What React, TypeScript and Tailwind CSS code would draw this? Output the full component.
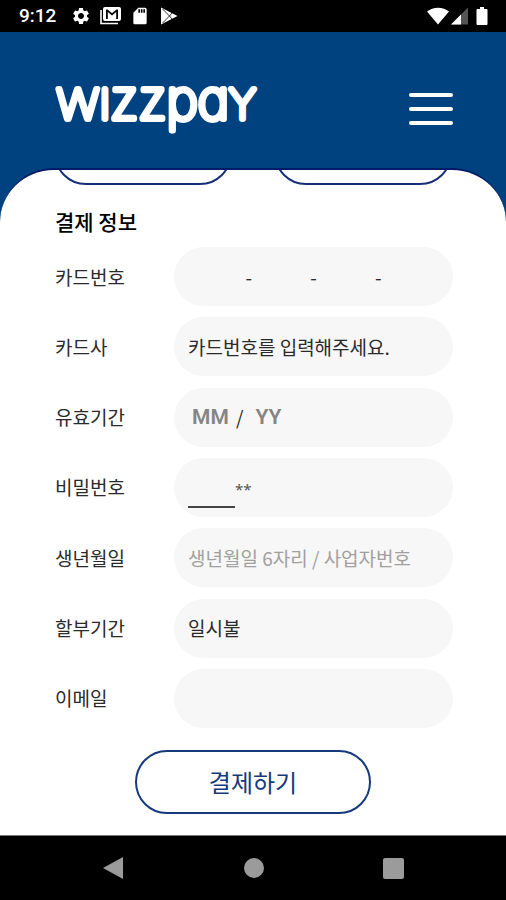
import type { ReactNode } from 'react';
import { MdSettings, MdSdCard } from 'react-icons/md';

const fieldBox = 'flex h-[59px] min-w-0 flex-1 items-center rounded-full bg-[#f7f7f7] px-3.5';
const textField = 'w-full min-w-0 bg-transparent outline-none';
const cardField = 'w-[57px] min-w-0 bg-transparent outline-none';
const dateField = 'w-11 font-[Roboto,sans-serif] text-[21px] font-semibold outline-none placeholder:text-[#858585]';

function StatusBar() {
  return (
    <div className="flex h-8 items-center justify-between bg-black pl-[19px] pr-[18px] text-white">
      <div className="flex items-center">
        <span className="w-[52px] font-[Roboto,sans-serif] text-[19px] font-medium leading-5">9:12</span>
        <MdSettings size={20} />
        <svg className="ml-2" width="23" height="20" viewBox="0 0 23 20">
          <path d="M2 4v13.5h17" fill="none" stroke="white" strokeWidth="1.6" />
          <path fillRule="evenodd" fill="white" d="M6 1h14a2 2 0 0 1 2 2v10a2 2 0 0 1-2 2H6a2 2 0 0 1-2-2V3a2 2 0 0 1 2-2zM7 3.5V13h1.8V6l4.2 3.6L17.200 6v7H19V3.500h-1.500L13 7.300 8.500 3.500z" />
        </svg>
        <MdSdCard className="ml-2" size={20} />
        <svg className="ml-2.5" width="18" height="18" viewBox="0 0 18 18">
          <path d="M1 0.500v17L17.500 9z" fill="white" />
          <path d="M2.500 2 9.500 9l-7 7M12 6 9.500 9l2.500 3" fill="none" stroke="black" strokeWidth="0.8" />
        </svg>
      </div>
      <div className="flex items-center">
        <svg width="22" height="18" viewBox="0 0 22 18">
          <path d="M0 4.500C6 -0.600 16 -0.600 22 4.500L11 17.500z" fill="white" />
        </svg>
        <svg className="ml-0.5" width="17" height="18" viewBox="0 0 17 18">
          <path d="M17 0.500v17H0z" fill="#555" />
          <path d="M10 7.500v10H0z" fill="white" />
        </svg>
        <svg className="ml-2" width="12" height="18" viewBox="0 0 12 18">
          <path d="M4 0h4v2h2.500a1 1 0 0 1 1 1v14a1 1 0 0 1-1 1h-9a1 1 0 0 1-1-1V3a1 1 0 0 1 1-1H4z" fill="white" />
        </svg>
      </div>
    </div>
  );
}

function Logo() {
  return (
    <svg width="220" height="76" viewBox="0 0 220 76" role="img" aria-label="wizzpay" className="block">
      <text
        x="3"
        y="57"
        fill="white"
        stroke="white"
        strokeWidth="6"
        strokeLinejoin="round"
        className="font-[Inter,sans-serif] text-[54px] font-thin [font-feature-settings:'cv11']"
      >
        w<tspan className="text-[41px]">I</tspan>zzpa<tspan className="text-[41px]">Y</tspan>
      </text>
    </svg>
  );
}

function Row({ id, label, children }: { id: string; label: string; children: ReactNode }) {
  return (
    <div className="flex items-center">
      <label htmlFor={id} className="w-[121px] shrink-0 pl-0.5">{label}</label>
      <div className={fieldBox}>{children}</div>
    </div>
  );
}

export default function App() {
  return (
    <div className="flex min-h-screen flex-col bg-[#00427f] font-['Noto_Sans_CJK_KR',sans-serif]">
      <StatusBar />

      <header className="flex h-[136px] items-center justify-between px-[53px]">
        <Logo />
        <button type="button" aria-label="메뉴" className="mt-[18px]">
          <svg width="44" height="34" viewBox="0 0 44 34" className="block">
            <path d="M2 3h40M2 17h40M2 31h40" stroke="white" strokeWidth="4" strokeLinecap="round" />
          </svg>
        </button>
      </header>

      <main className="flex flex-1 flex-col overflow-hidden rounded-t-[54px] border-t-2 border-[#001c66] bg-white px-[53px]">
        {/* previous section, scrolled up under the header */}
        <div className="flex h-[15px] items-end justify-between overflow-hidden px-px">
          <button type="button" aria-label="이전" className="h-16 w-[178px] shrink-0 rounded-full border-2 border-[#153079]" />
          <button type="button" aria-label="다음" className="h-16 w-[178px] shrink-0 rounded-full border-2 border-[#153079]" />
        </div>

        <h1 className="mt-5 pl-0.5 text-[21px] font-medium leading-8 text-black">결제 정보</h1>

        <form className="mt-2.5 flex flex-1 flex-col text-[19px] leading-7 text-[#2a2a2a]">
          <div className="flex flex-1 flex-col justify-between gap-2">
            <Row id="card1" label="카드번호">
              <input id="card1" className={cardField} />
              <span className="w-2 text-center">-</span>
              <input aria-label="카드번호 2" className={cardField} />
              <span className="w-2 text-center">-</span>
              <input aria-label="카드번호 3" className={cardField} />
              <span className="w-2 text-center">-</span>
              <input aria-label="카드번호 4" className={cardField} />
            </Row>
            <Row id="issuer" label="카드사">
              <input id="issuer" readOnly value="카드번호를 입력해주세요." className={textField} />
            </Row>
            <Row id="month" label="유효기간">
              <input id="month" placeholder="MM" className={`${dateField} ml-1`} />
              <span>/</span>
              <input aria-label="유효기간 년" placeholder="YY" className={`${dateField} ml-3`} />
            </Row>
            <Row id="pin" label="비밀번호">
              <input id="pin" type="password" maxLength={2} className="mt-2.5 h-8 w-[47px] border-b-2 border-[#444] outline-none" />
              <span className="mt-1 font-['Noto_Sans',sans-serif] text-[15px] text-[#555]">**</span>
            </Row>
            <Row id="birth" label="생년월일">
              <input id="birth" placeholder="생년월일 6자리 / 사업자번호" className={`${textField} placeholder:text-[#a0a0a0]`} />
            </Row>
            <Row id="plan" label="할부기간">
              <select id="plan" className={`${textField} appearance-none`}>
                <option>일시불</option>
              </select>
            </Row>
            <Row id="email" label="이메일">
              <input id="email" type="email" className={textField} />
            </Row>
          </div>

          <button type="submit" className="mb-[21px] mt-[22px] h-16 w-[236px] self-center rounded-full border-2 border-[#143a7b] text-[24px] text-[#143a7b]">
            결제하기
          </button>
        </form>
      </main>

      <nav className="flex h-[65px] items-center justify-between border-t border-[#777] bg-black px-[102px]">
        <button type="button" aria-label="뒤로">
          <svg width="22" height="24" viewBox="0 0 22 24" className="block">
            <path d="M21 1v22L1 12z" fill="#9b9b9b" />
          </svg>
        </button>
        <button type="button" aria-label="홈" className="size-5 rounded-full bg-[#9b9b9b]" />
        <button type="button" aria-label="최근 앱" className="size-[21px] rounded-[2px] bg-[#9b9b9b]" />
      </nav>
    </div>
  );
}
